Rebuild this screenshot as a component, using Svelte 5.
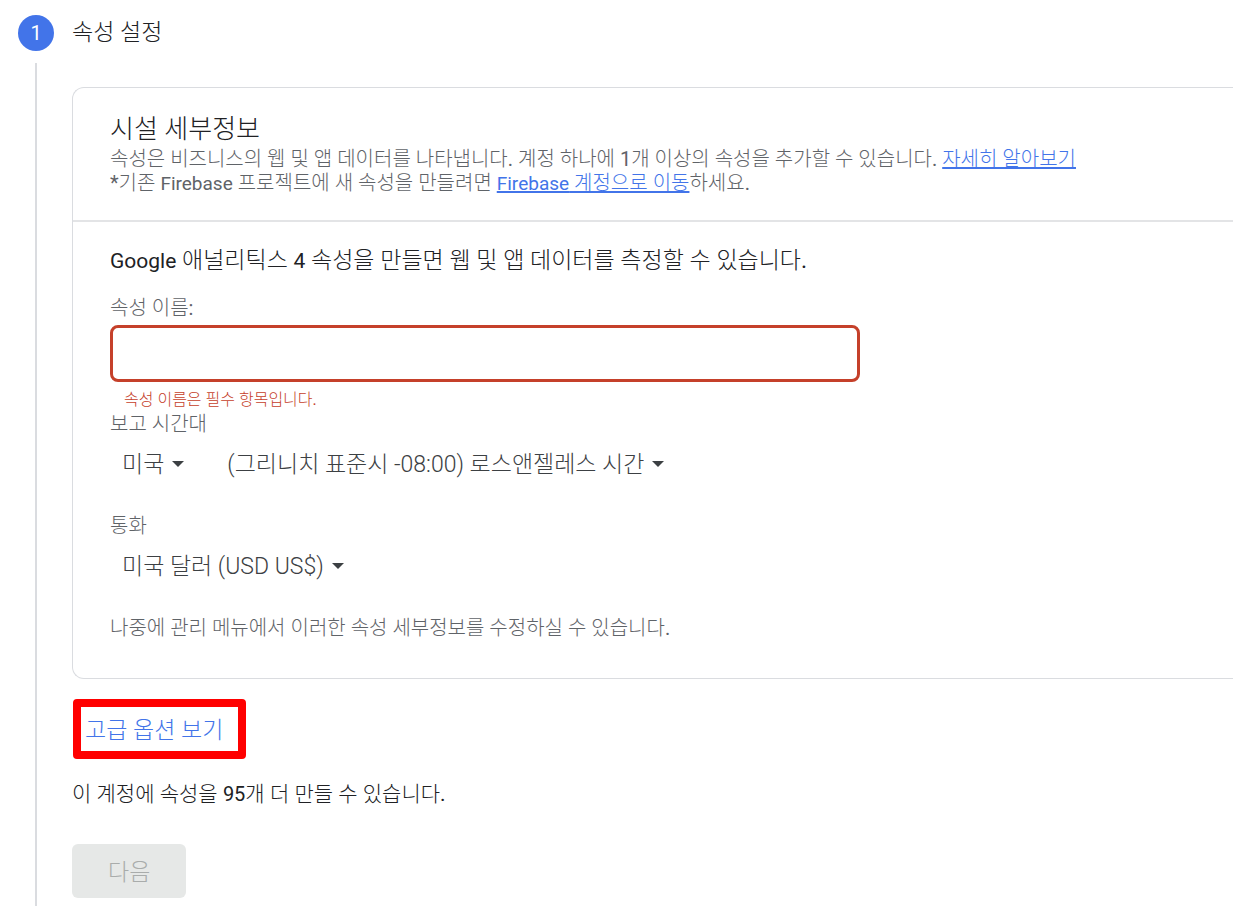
<script lang="ts">
	interface Option {
		value: string;
		label: string;
	}

	const countries: Option[] = [{ value: 'US', label: '미국' }];
	const timezones: Option[] = [
		{ value: 'America/Los_Angeles', label: '(그리니치 표준시 -08:00) 로스앤젤레스 시간' }
	];
	const currencies: Option[] = [{ value: 'USD', label: '미국 달러 (USD US$)' }];

	const remaining = 95;

	let name = $state('');
	let country = $state('US');
	let timezone = $state('America/Los_Angeles');
	let currency = $state('USD');

	let invalid = $derived(name.trim() === '');
</script>

{#snippet caret()}
	<svg class="caret" viewBox="0 0 12 6" aria-hidden="true"><path d="M0 0h12L6 6z" /></svg>
{/snippet}

<main class="step">
	<div class="rail">
		<span class="step-number">1</span>
		<span class="rail-line"></span>
	</div>

	<div class="step-body">
		<h1 class="step-title">속성 설정</h1>

		<section class="card">
			<header class="card-header">
				<h2>시설 세부정보</h2>
				<p>
					속성은 비즈니스의 웹 및 앱 데이터를 나타냅니다. 계정 하나에 1개 이상의 속성을 추가할 수 있습니다.
					<a href="#learn-more">자세히 알아보기</a>
				</p>
				<p>
					*기존 <span class="latin">Firebase</span> 프로젝트에 새 속성을 만들려면
					<a href="#firebase"><span class="latin">Firebase</span> 계정으로 이동</a>하세요.
				</p>
			</header>

			<div class="card-content">
				<h3>
					<span class="latin">Google</span> 애널리틱스 <span class="latin">4</span> 속성을 만들면 웹 및 앱 데이터를 측정할 수 있습니다.
				</h3>

				<label class="label" for="property-name">속성 이름:</label>
				<input
					id="property-name"
					class="name-input"
					class:invalid
					type="text"
					aria-invalid={invalid}
					aria-describedby="name-error"
					bind:value={name}
				/>
				<p class="error" id="name-error">{invalid ? '속성 이름은 필수 항목입니다.' : ''}</p>

				<label class="label" for="country">보고 시간대</label>
				<div class="selects">
					<div class="select">
						<select id="country" bind:value={country}>
							{#each countries as option}
								<option value={option.value}>{option.label}</option>
							{/each}
						</select>
						{@render caret()}
					</div>
					<div class="select">
						<select aria-label="보고 시간대" bind:value={timezone}>
							{#each timezones as option}
								<option value={option.value}>{option.label}</option>
							{/each}
						</select>
						{@render caret()}
					</div>
				</div>

				<label class="label" for="currency">통화</label>
				<div class="selects">
					<div class="select">
						<select id="currency" bind:value={currency}>
							{#each currencies as option}
								<option value={option.value}>{option.label}</option>
							{/each}
						</select>
						{@render caret()}
					</div>
				</div>

				<p class="note">나중에 관리 메뉴에서 이러한 속성 세부정보를 수정하실 수 있습니다.</p>
			</div>
		</section>

		<button class="advanced" type="button">고급 옵션 보기</button>
		<p class="quota">이 계정에 속성을 <span class="latin">{remaining}</span>개 더 만들 수 있습니다.</p>
		<button class="next" type="button" disabled={invalid}>다음</button>
	</div>
</main>

<style>
	:global(body) {
		background: #fff;
	}

	.step {
		display: flex;
		min-height: 100vh;
		box-sizing: border-box;
		padding-top: 15px;
		font-family: Roboto, 'Noto Sans CJK KR Light', 'Noto Sans CJK KR', sans-serif;
		font-weight: 400;
		color: #202124;
		overflow: hidden;
	}

	h1,
	h2,
	h3,
	p {
		margin: 0;
		font-weight: inherit;
	}

	.rail {
		flex: none;
		display: flex;
		flex-direction: column;
		align-items: center;
		gap: 12px;
		width: 72px;
	}

	.step-number {
		width: 36px;
		height: 36px;
		border-radius: 50%;
		background: #4274e9;
		color: #fff;
		font-size: 20px;
		line-height: 36px;
		text-align: center;
	}

	.rail-line {
		flex: 1;
		width: 2px;
		background: #dadce0;
	}

	.step-body {
		flex: 1;
		min-width: 0;
		padding-bottom: 8px;
	}

	.step-title {
		margin-bottom: 36px;
		font-size: 23px;
		line-height: 36px;
	}

	.card {
		border: 1px solid #dadce0;
		border-right: none;
		border-radius: 12px 0 0 12px;
	}

	.card-header {
		padding: 23px 37px 24px;
		border-bottom: 2px solid #e3e4e6;
	}

	.card-header h2 {
		font-size: 26px;
		line-height: 36px;
	}

	.card-header p {
		color: #5f6368;
		font-size: 20px;
		line-height: 24px;
	}

	/* Latin letters look large next to the light Hangul */
	.card-header .latin {
		font-size: 19px;
	}

	a {
		color: #4274e9;
	}

	.card-content {
		display: flex;
		flex-direction: column;
		padding: 24px 37px 38px;
	}

	h3 {
		margin-bottom: 20px;
		font-size: 23px;
		line-height: 30px;
	}

	h3 .latin {
		font-size: 21px;
	}

	.label,
	.note {
		color: #5f6368;
		font-size: 20px;
		line-height: 24px;
	}

	.name-input {
		box-sizing: border-box;
		width: 100%;
		max-width: 750px;
		height: 57px;
		margin-top: 5px;
		padding: 0 16px;
		border: 3px solid #dadce0;
		border-radius: 8px;
		outline: none;
		background: #fff;
		color: inherit;
		font: inherit;
		font-size: 23px;
	}

	.name-input.invalid {
		border-color: #c5402a;
	}

	.error {
		min-height: 20px;
		margin: 8px 0 2px;
		padding-left: 14px;
		color: #c5402a;
		font-size: 16px;
		line-height: 20px;
	}

	.selects {
		display: flex;
		gap: 43px;
		margin: 10px 0 32px;
		padding-left: 12px;
	}

	.select {
		display: flex;
		align-items: center;
		position: relative;
	}

	select {
		appearance: none;
		field-sizing: content;
		height: 36px;
		padding: 0 20px 0 0;
		border: none;
		background: none;
		color: #3c4043;
		font: inherit;
		font-size: 23px;
		font-weight: 300;
		cursor: pointer;
	}

	.caret {
		position: absolute;
		right: 0;
		width: 12px;
		height: 6px;
		fill: #3c4043;
		pointer-events: none;
	}

	.advanced {
		display: block;
		height: 60px;
		margin: 20px 0 0 1px;
		padding: 0 15px 3px 4px;
		border: 8px solid #f00;
		border-radius: 4px;
		background: #fff;
		color: #4274e9;
		font: inherit;
		font-size: 23px;
		cursor: pointer;
	}

	.quota {
		margin: 21px 0 36px;
		font-size: 21px;
		line-height: 28px;
	}

	.quota .latin {
		font-size: 20px;
	}

	.next {
		height: 54px;
		padding: 0 36px 3px;
		border: none;
		border-radius: 6px;
		background: #4274e9;
		color: #fff;
		font: inherit;
		font-size: 23px;
	}

	.next:disabled {
		background: #e6e8e7;
		color: #a9acab;
	}
</style>
